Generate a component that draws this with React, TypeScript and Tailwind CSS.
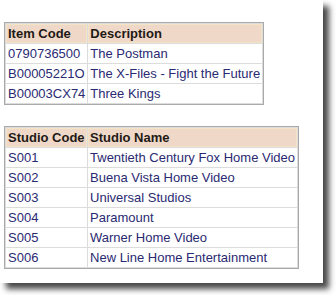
import React from "react";

type Row = [string, string];

const items: Row[] = [
  ["0790736500", "The Postman"],
  ["B00005221O", "The X-Files - Fight the Future"],
  ["B00003CX74", "Three Kings"],
];

const studios: Row[] = [
  ["S001", "Twentieth Century Fox Home Video"],
  ["S002", "Buena Vista Home Video"],
  ["S003", "Universal Studios"],
  ["S004", "Paramount"],
  ["S005", "Warner Home Video"],
  ["S006", "New Line Home Entertainment"],
];

function DataTable({
  head,
  rows,
  tableClass,
  firstColClass,
}: {
  head: Row;
  rows: Row[];
  tableClass: string;
  firstColClass: string;
}) {
  return (
    <table
      className={`${tableClass} border border-[#a9a9a9] bg-[#dcdcdc] border-separate border-spacing-[1px] text-[13px] leading-none`}
    >
      <thead>
        <tr>
          {head.map((h, i) => (
            <th
              key={h}
              className={`${i === 0 ? firstColClass : ""} h-[19px] bg-[#f0d8c8] px-[2px] text-left font-bold text-[#1e1a16] shadow-[inset_0_0_0_1px_#f3e4c6] whitespace-nowrap`}
            >
              {h}
            </th>
          ))}
        </tr>
      </thead>
      <tbody>
        {rows.map((r) => (
          <tr key={r[0]}>
            {r.map((c, i) => (
              <td
                key={i}
                className="h-[19px] bg-white px-[2px] text-[#2a2a72] whitespace-nowrap"
              >
                {c}
              </td>
            ))}
          </tr>
        ))}
      </tbody>
    </table>
  );
}

export default function App() {
  return (
    <div className="w-[336px] h-[295px] bg-white overflow-hidden font-['Liberation_Sans',Arial,sans-serif]">
      <div className="w-[323px] h-[283px] bg-white shadow-[6px_6px_6px_rgba(0,0,0,0.72)] pt-[22px] pl-[4px] flex flex-col gap-[21px]">
        <DataTable
          head={["Item Code", "Description"]}
          rows={items}
          tableClass="w-[255px]"
          firstColClass="w-[79px]"
        />
        <DataTable
          head={["Studio Code", "Studio Name"]}
          rows={studios}
          tableClass="w-[295px]"
          firstColClass="w-[82px]"
        />
      </div>
    </div>
  );
}
